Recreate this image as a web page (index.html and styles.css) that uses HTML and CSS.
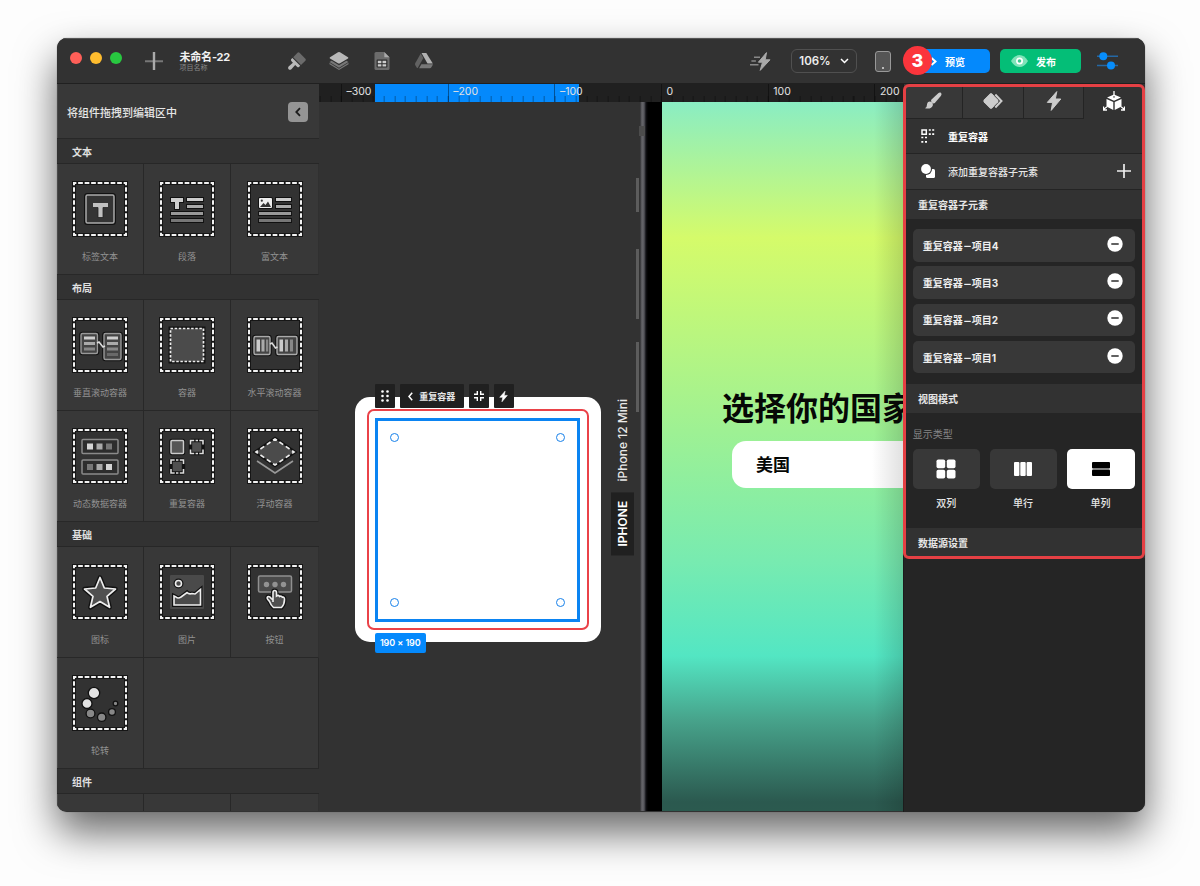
FILE: index.html
```html
<!DOCTYPE html>
<html lang="zh-CN">
<head>
    <meta charset="UTF-8">
    <meta name="viewport" content="width=device-width, initial-scale=1.0">
    <title>未命名-22</title>
    <link rel="stylesheet" href="styles.css">
</head>
<body>
    <svg class="defs" width="0" height="0">
        <symbol id="frame" viewBox="0 0 58 58">
            <rect x="3" y="3" width="52" height="52" fill="#323232" stroke="#161616" stroke-width="4"/>
            <path d="M3 3H55V55H3Z" fill="none" stroke="#f2f2f2" stroke-width="2" stroke-dasharray="4.7 1.8" stroke-dashoffset="2.35"/>
        </symbol>
        <symbol id="bolt" viewBox="0 0 16 20">
            <path d="M10.8.6L1.3 11.4H6.6L5.2 19.4L14.8 8H9.3Z" stroke="currentColor" stroke-width="1" stroke-linejoin="round"/>
        </symbol>
        <symbol id="minus" viewBox="0 0 16 16">
            <circle cx="8" cy="8" r="7.7" fill="#fff"/>
            <path d="M4.3 8h7.4" stroke="#2c2c2c" stroke-width="1.5"/>
        </symbol>
    </svg>

    <div class="window">
        <header class="topbar">
            <div class="lights"><i class="red"></i><i class="yellow"></i><i class="green"></i></div>
            <svg class="add" width="18" height="18" viewBox="0 0 18 18"><path d="M0 9.3h18" stroke="#777" stroke-width="2"/><path d="M9 0v18" stroke="#aaa" stroke-width="2.4"/></svg>
            <div class="project">
                <b>未命名-22</b>
                <span>项目名称</span>
            </div>
            <div class="tools">
                <svg width="20" height="20" viewBox="0 0 20 20"><path d="M10.5 1.8Q11.5.8 12.5 1.8L18.4 7.7Q19.4 8.7 18.4 9.7L14 14 6.2 6.2Z" fill="#6b6b6b"/><path d="M5.4 7L13.2 14.8 12 16Q11 16.7 10 15.8L8.2 14 4.4 18.2Q2.8 19.4 1.6 18.2T1.6 15.4L5.9 11.7 4.3 10Q3.5 9 4.3 8.1Z" fill="#b9b9b9"/></svg>
                <svg width="20" height="20" viewBox="0 0 20 20"><path d="M.5 11.8L10 17.8 19.5 11.8V13.2L10 19 .5 13.2Z M.5 11L10 16.8 19.5 11 17.4 9.8 10 14.3 2.6 9.8Z" fill="#777"/><path d="M9 1.3Q10 .7 11 1.3L19 6.2Q19.8 6.9 19 7.6L11 12.3Q10 12.9 9 12.3L1 7.6Q.2 6.9 1 6.2Z" fill="#b8b8b8"/></svg>
                <svg width="20" height="20" viewBox="0 0 20 20"><path d="M4 1H12L17.5 6.5V17.5Q17.5 19 16 19H4Q2.5 19 2.5 17.5V2.5Q2.5 1 4 1Z" fill="#6c6c6c"/><path d="M12.3 1L17.5 6.2H12.3Z" fill="#aaa"/><rect x="4.6" y="8.6" width="10.8" height="8" rx=".8" fill="#2d2d2d"/><path d="M5.8 9.8h3.6v2.4H5.8zM10.5 9.8h3.7v2.4h-3.7zM5.8 13.2h3.6v2.3H5.8zM10.5 13.2h3.7v2.3h-3.7z" fill="#ccc"/></svg>
                <svg width="20" height="20" viewBox="0 0 20 20"><path d="M6.7 2.5L9.4 7.1 3.8 16.8Q3.3 17.4 2.8 16.8L1.2 13.9Q.8 13.1 1.2 12.3Z" fill="#626262"/><path d="M7.5 2H12.3L18.8 12.5H13.5Z" fill="#b2b2b2"/><path d="M7.4 13.3H18.9Q18.8 14 18.4 14.6L17.2 16.6Q16.8 17.3 16 17.3H5.1Z" fill="#777"/></svg>
            </div>
            <div class="actions">
                <svg class="fast" width="21" height="19" viewBox="0 0 21 19" fill="#aaa"><path d="M16.5 .6L8.4 10.2H12.5L10.2 18.4 20 7.8H15.2Z" stroke="#aaa" stroke-linejoin="round"/><path d="M4 5.2h6M1.4 9h4.5M0 12.8h8.5" stroke="#888" stroke-width="1.5"/></svg>
                <div class="zoom">106%<svg width="9" height="6" viewBox="0 0 9 6"><path d="M1 1l3.5 3.5L8 1" fill="none" stroke="#fff" stroke-width="1.5"/></svg></div>
                <div class="device"></div>
                <button class="preview"><svg width="7" height="9" viewBox="0 0 7 9"><path d="M1.5 1L5.5 4.5 1.5 8" fill="none" stroke="#fff" stroke-width="2"/></svg>预览<i class="badge">3</i></button>
                <button class="publish"><svg width="17" height="12" viewBox="0 0 17 12"><path d="M0 6Q3.5 0 8.5 0T17 6Q13.5 12 8.5 12T0 6Z" fill="#7fe3b9"/><circle cx="8.5" cy="6" r="3.5" fill="#fff"/><circle cx="8.5" cy="6" r="1.8" fill="#3cca90"/></svg>发布</button>
                <svg class="sliders" width="21" height="18" viewBox="0 0 21 18"><path d="M0 4.3h21M0 13.5h21" stroke="#2468a5" stroke-width="1.6"/><circle cx="6.3" cy="4.3" r="4" fill="#078dfb"/><circle cx="14" cy="13.5" r="4" fill="#078dfb"/></svg>
            </div>
        </header>

        <main class="workspace">
            <aside class="library">
                <div class="library-head">将组件拖拽到编辑区中<button class="collapse"><svg width="8" height="10" viewBox="0 0 8 10"><path d="M6 1.2L2.3 5 6 8.8" fill="none" stroke="#1c1c1c" stroke-width="1.8"/></svg></button></div>

                <h3>文本</h3>
                <div class="cells">
                    <div class="cell">
                        <svg viewBox="0 0 58 58"><use href="#frame"/><rect x="15" y="15" width="28" height="28" rx="1.5" fill="#333" stroke="#111" stroke-width="4"/><rect x="15" y="15" width="28" height="28" rx="1.5" fill="#343434" stroke="#aaa" stroke-width="1.5"/><path d="M21.5 22.5H37.5V27.5H32V37.5H27V27.5H21.5Z" fill="#c0c0c0" stroke="#222" stroke-width=".8"/></svg>
                        <span>标签文本</span>
                    </div>
                    <div class="cell">
                        <svg viewBox="0 0 58 58"><use href="#frame"/><g stroke="#101010" stroke-width="1.8" paint-order="stroke"><path d="M13 18h12v4h-4v7h-4v-7h-4z" fill="#ccc"/><path d="M29 18h16v3h-16z" fill="#ccc"/><path d="M29 25h16v3h-16z" fill="#aaa"/><path d="M13 32h32v3h-32z" fill="#999"/><path d="M13 39h32v3h-32z" fill="#777"/></g></svg>
                        <span>段落</span>
                    </div>
                    <div class="cell">
                        <svg viewBox="0 0 58 58"><use href="#frame"/><g stroke="#101010" stroke-width="1.8" paint-order="stroke"><rect x="13" y="18" width="13" height="10" rx="1" fill="#eee"/><path d="M30 18h15v3h-15z" fill="#ccc"/><path d="M30 25h15v3h-15z" fill="#aaa"/><path d="M13 32h32v3h-32z" fill="#999"/><path d="M13 39h32v3h-32z" fill="#777"/></g><path d="M14 27l3.5-4 2 2 2.5-3.5 3 5.5z" fill="#333"/><circle cx="15.8" cy="20.7" r="1.1" fill="#333"/></svg>
                        <span>富文本</span>
                    </div>
                </div>

                <h3>布局</h3>
                <div class="cells">
                    <div class="cell">
                        <svg viewBox="0 0 58 58"><use href="#frame"/><g fill="#444" stroke="#111" stroke-width="3.6"><rect x="10" y="17.5" width="16.5" height="20" rx="1.5"/><rect x="33" y="17.5" width="17" height="26" rx="1.5"/></g><g fill="#444" stroke="#999" stroke-width="1.4"><rect x="10" y="17.5" width="16.5" height="20" rx="1.5"/><rect x="33" y="17.5" width="17" height="26" rx="1.5"/></g><path d="M26 27l2-1 4 5 2-1" fill="none" stroke="#ddd" stroke-width="1.5"/><path d="M13 20.5h11v3H13zM36 20.5h11v3H36z" fill="#ccc"/><path d="M13 26h11v3H13zM36 26h11v3H36z" fill="#aaa"/><path d="M13 31.5h11v3H13zM36 31.5h11v3H36z" fill="#888"/><path d="M36 37h11v3H36z" fill="#696969"/></svg>
                        <span>垂直滚动容器</span>
                    </div>
                    <div class="cell">
                        <svg viewBox="0 0 58 58"><use href="#frame"/><rect x="12.5" y="12.5" width="33" height="33" fill="#4b4b4b" stroke="#111" stroke-width="4"/><rect x="12.5" y="12.5" width="33" height="33" fill="#4b4b4b" stroke="#eee" stroke-width="1.7" stroke-dasharray="2.5 1.625"/></svg>
                        <span>容器</span>
                    </div>
                    <div class="cell">
                        <svg viewBox="0 0 58 58"><use href="#frame"/><g fill="#444" stroke="#111" stroke-width="3.6"><rect x="8" y="20.5" width="16" height="18" rx="1.5"/><rect x="31" y="20.5" width="20" height="18" rx="1.5"/></g><g fill="#444" stroke="#aaa" stroke-width="1.4"><rect x="8" y="20.5" width="16" height="18" rx="1.5"/><rect x="31" y="20.5" width="20" height="18" rx="1.5"/></g><path d="M24 28l2-1 3.5 5 2-1" fill="none" stroke="#ddd" stroke-width="1.5"/><path d="M10.5 23.5h3.5v12h-3.5zM33.5 23.5h3.5v12h-3.5z" fill="#ccc"/><path d="M15.5 23.5h3v12h-3zM39 23.5h3v12h-3z" fill="#aaa"/><path d="M20 23.5h2.2v12H20zM44 23.5h3v12h-3z" fill="#888"/></svg>
                        <span>水平滚动容器</span>
                    </div>
                    <div class="cell">
                        <svg viewBox="0 0 58 58"><use href="#frame"/><rect x="11" y="12.5" width="36" height="14" rx="1" fill="#2d2d2d" stroke="#8a8a8a" stroke-width="1.5"/><rect x="11" y="33" width="36" height="14" rx="1" fill="#2d2d2d" stroke="#8a8a8a" stroke-width="1.5"/><path d="M16 16.5h6v6h-6zM35 37h6v6h-6z" fill="#d5d5d5"/><path d="M25.5 16.5h6v6h-6zM25.5 37h6v6h-6z" fill="#aaa"/><path d="M35 16.5h6v6h-6zM16 37h6v6h-6z" fill="#777"/></svg>
                        <span>动态数据容器</span>
                    </div>
                    <div class="cell">
                        <svg viewBox="0 0 58 58"><use href="#frame"/><g fill="#505050" stroke="#111" stroke-width="3.4"><rect x="13" y="13.5" width="12.5" height="13" rx="1"/><rect x="32.5" y="13.5" width="12.5" height="13" rx="1"/><rect x="13" y="33" width="12.5" height="13" rx="1"/></g><rect x="13" y="13.5" width="12.5" height="13" rx="1" fill="#555" stroke="#ccc" stroke-width="1.5"/><g fill="none" stroke="#ddd" stroke-width="1.6"><path d="M32.5 17.5v-4h3.7M37.6 13.5h2.4M41.3 13.5H45v4M32.5 22.5v4h3.7M37.6 26.5h2.4M41.3 26.5H45v-4"/><path d="M13 37v-4h3.7M18 33h2.4M21.8 33h3.7v4M13 42v4h3.7M18 46h2.4M21.8 46h3.7v-4"/></g></svg>
                        <span>重复容器</span>
                    </div>
                    <div class="cell">
                        <svg viewBox="0 0 58 58"><use href="#frame"/><path d="M11 34l18 12 18-12" fill="none" stroke="#999" stroke-width="1.6"/><path d="M29 12L48 25 29 38 10 25Z" fill="#4b4b4b" stroke="#111" stroke-width="4"/><path d="M29 12L48 25 29 38 10 25Z" fill="#4b4b4b" stroke="#eee" stroke-width="1.7" stroke-dasharray="4.6 3.07" stroke-dashoffset="2.3"/></svg>
                        <span>浮动容器</span>
                    </div>
                </div>

                <h3>基础</h3>
                <div class="cells">
                    <div class="cell">
                        <svg viewBox="0 0 58 58"><use href="#frame"/><g fill="#505050" stroke-linejoin="round"><path d="M29 14.5L33.3 25 44.5 26 36 33.3 38.6 44.3 29 38.5 19.4 44.3 22 33.3 13.500 26 24.700 25Z" stroke="#111" stroke-width="4.5"/><path d="M29 14.5L33.3 25 44.5 26 36 33.3 38.6 44.3 29 38.5 19.4 44.3 22 33.3 13.5 26 24.7 25Z" stroke="#eee" stroke-width="1.7"/></g></svg>
                        <span>图标</span>
                    </div>
                    <div class="cell">
                        <svg viewBox="0 0 58 58"><use href="#frame"/><rect x="12" y="12" width="34" height="34" rx="1" fill="#4a4a4a"/><g fill="#4a4a4a" stroke="#111" stroke-width="4"><circle cx="20.5" cy="20.5" r="3"/><path d="M16 42V33L18 34Q20 36 23 34L29 29.5Q31 31.5 34 30.5L37 31 42.5 26.5V42Z"/></g><g fill="#4a4a4a" stroke="#eee" stroke-width="1.6"><circle cx="20.5" cy="20.5" r="3"/><path d="M16 42V33L18 34Q20 36 23 34L29 29.5Q31 31.5 34 30.5L37 31 42.5 26.5V42Z"/></g></svg>
                        <span>图片</span>
                    </div>
                    <div class="cell">
                        <svg viewBox="0 0 58 58"><use href="#frame"/><rect x="12.5" y="13" width="33" height="16" rx="1.5" fill="#4a4a4a" stroke="#909090" stroke-width="1.5"/><g fill="#929292"><circle cx="20.5" cy="21.5" r="2.7"/><circle cx="29" cy="21.5" r="2.7"/><circle cx="37.5" cy="21.5" r="2.7"/></g><g fill="#505050"><path d="M27 39V29.5Q27 27.5 28.7 27.5T30.5 29.5V33Q32.5 31.5 33.5 33.5 35.5 32.5 36.3 34.3 38.5 33.5 38.5 36.5 38.5 41.5 35.5 44.5H27.5Q25 42.5 23.5 38.5L21.5 36Q20.5 34 22.3 33.5 24 33.5 25.3 35.5L27 37" stroke="#111" stroke-width="4"/><path d="M27 39V29.5Q27 27.5 28.7 27.5T30.5 29.5V33Q32.5 31.5 33.5 33.5 35.5 32.5 36.3 34.3 38.5 33.5 38.5 36.5 38.5 41.5 35.5 44.5H27.5Q25 42.5 23.5 38.5L21.5 36Q20.5 34 22.3 33.5 24 33.5 25.3 35.5L27 37" stroke="#eee" stroke-width="1.6"/></g></svg>
                        <span>按钮</span>
                    </div>
                    <div class="cell">
                        <svg viewBox="0 0 58 58"><use href="#frame"/><g stroke="#111" stroke-width="1.3"><circle cx="23" cy="19" r="5.7" fill="#e2e2e2"/><circle cx="16" cy="29.5" r="5" fill="#e2e2e2"/><circle cx="19.5" cy="39.5" r="4.4" fill="#888"/><circle cx="30.7" cy="43.2" r="4.2" fill="#888"/><circle cx="41" cy="38" r="3.4" fill="#888"/><circle cx="44.5" cy="29.5" r="2.3" fill="#888"/></g></svg>
                        <span>轮转</span>
                    </div>
                    <div class="cell empty"></div>
                </div>

                <h3>组件</h3>
                <div class="cells">
                    <div class="cell"><svg viewBox="0 0 58 58"><use href="#frame"/></svg></div>
                    <div class="cell"><svg viewBox="0 0 58 58"><use href="#frame"/></svg></div>
                    <div class="cell"><svg viewBox="0 0 58 58"><use href="#frame"/></svg></div>
                </div>
            </aside>

            <section class="canvas">
                <div class="ruler">
                    <div class="range"></div>
                    <span>–300</span><span>–200</span><span>–100</span><span>0</span><span>100</span><span>200</span>
                </div>
                <div class="stage">
                    <div class="card">
                        <div class="highlight">
                            <div class="selection"><i></i><i></i><i></i><i></i></div>
                        </div>
                    </div>
                    <div class="node-bar">
                        <b><svg width="8" height="12" viewBox="0 0 8 12" fill="#fff"><circle cx="1.5" cy="1.5" r="1.3"/><circle cx="6.5" cy="1.5" r="1.3"/><circle cx="1.5" cy="6" r="1.3"/><circle cx="6.5" cy="6" r="1.3"/><circle cx="1.5" cy="10.5" r="1.3"/><circle cx="6.5" cy="10.5" r="1.3"/></svg></b>
                        <b class="name"><svg width="5" height="9" viewBox="0 0 5 9"><path d="M4.2.8L1 4.5 4.2 8.2" fill="none" stroke="#fff" stroke-width="1.5"/></svg>重复容器</b>
                        <b><svg width="10" height="10" viewBox="0 0 10 10"><path d="M3.3 0v3.3H0M6.7 0v3.3H10M3.3 10V6.7H0M6.7 10V6.7H10" fill="none" stroke="#fff" stroke-width="1.4"/></svg></b>
                        <b class="bolt"><svg width="9" height="13" fill="#fff"><use href="#bolt"/></svg></b>
                    </div>
                    <div class="size">190 × 190</div>
                    <div class="device-name"><b>IPHONE</b><span>iPhone 12 Mini</span></div>
                    <div class="phone">
                        <i class="side mute"></i><i class="side up"></i><i class="side down"></i><i class="antenna"></i>
                        <div class="screen">
                            <h1>选择你的国家</h1>
                            <div class="field">美国</div>
                        </div>
                    </div>
                </div>
            </section>

            <aside class="inspector">
                <nav class="tabs">
                    <a><svg width="18" height="18" viewBox="0 0 18 18" fill="#ccc"><path d="M16.5.6Q18.3 2 16.8 4L10.8 11Q9.5 12 8 10.5T7.5 7.5L14.5 1Q15.6 0 16.5.6Z"/><path d="M6 9.5Q9.5 10 8.8 13.5 7.5 17.5 1 16.3 3 15.5 3 12.5 3.3 9.5 6 9.5Z"/></svg></a>
                    <a><svg width="20" height="16" viewBox="0 0 20 16"><path d="M7 .7Q8 0 9 .7L15 6.8Q16 8 15 9.2L9 15.3Q8 16 7 15.3L1 9.2Q0 8 1 6.8Z" fill="#ccc"/><path d="M12 1.5L18.500 8 12 14.500" fill="none" stroke="#383838" stroke-width="4"/><path d="M7 .7Q8 0 9 .7L15 6.8Q16 8 15 9.2L9 15.3Q8 16 7 15.3L1 9.200Q0 8 1 6.800Z" fill="#ccc"/><path d="M12.300 1.500L18.500 8 12.300 14.500" fill="none" stroke="#ccc" stroke-width="2"/></svg></a>
                    <a class="bolt"><svg width="16" height="20" fill="#ccc"><use href="#bolt"/></svg></a>
                    <a class="active"><svg width="22" height="20" viewBox="0 0 22 20"><path d="M11 3.5L18 6.5 11 9.7 4 6.5ZM3.5 8L10.3 11V19L3.5 15.5ZM18.5 8L11.7 11V19L18.5 15.5Z" fill="#fff"/><path d="M11 0v6M0 18.8l4-3M22 18.8l-4-3M.5 15.5V19H4M21.5 15.5V19H18" stroke="#fff" stroke-width="1.3" fill="none"/><path d="M11 5v1.8" stroke="#303030" stroke-width="1"/></svg></a>
                </nav>
                <div class="row title"><svg width="14" height="14" viewBox="0 0 14 14" fill="none" stroke="#fff"><path d="M1 1h4.3v4.3H1z" stroke-width="1.5"/><path d="M7.8 1h2M11.2 1h2M7.8 5.2h2M11.2 5.2h2M.3 8.5h2M4 8.5h2M.3 12.8h2M4 12.8h2" stroke-width="1.7"/></svg>重复容器</div>
                <div class="row add-row"><svg width="14" height="14" viewBox="0 0 14 14"><path d="M7 5H12.5Q14 5 14 6.5V12.5Q14 14 12.5 14H6.5Q5 14 5 12.5V6Z" fill="#fff"/><circle cx="5.2" cy="5" r="5.9" fill="#383838"/><circle cx="5" cy="5" r="4.9" fill="#fff"/></svg>添加重复容器子元素<svg class="plus" width="14" height="14" viewBox="0 0 14 14"><path d="M0 7h14M7 0v14" stroke="#eee" stroke-width="1.7"/></svg></div>
                <h4>重复容器子元素</h4>
                <ul class="items">
                    <li>重复容器<em>–</em>项目4<svg width="16" height="16"><use href="#minus"/></svg></li>
                    <li>重复容器<em>–</em>项目3<svg width="16" height="16"><use href="#minus"/></svg></li>
                    <li>重复容器<em>–</em>项目2<svg width="16" height="16"><use href="#minus"/></svg></li>
                    <li>重复容器<em>–</em>项目1<svg width="16" height="16"><use href="#minus"/></svg></li>
                </ul>
                <h4>视图模式</h4>
                <div class="modes">
                    <p>显示类型</p>
                    <div class="mode-list">
                        <div class="mode"><button><svg width="20" height="20" viewBox="0 0 20 20" fill="#fff"><rect x=".5" y=".5" width="8.7" height="8.7" rx="1.8"/><rect x="10.8" y=".5" width="8.7" height="8.7" rx="1.8"/><rect x=".5" y="10.8" width="8.7" height="8.7" rx="1.8"/><rect x="10.8" y="10.8" width="8.7" height="8.7" rx="1.8"/></svg></button>双列</div>
                        <div class="mode"><button><svg width="18" height="14" viewBox="0 0 18 14" fill="#fff"><rect width="5.4" height="14" rx="1"/><rect x="6.3" width="5.4" height="14" rx="1"/><rect x="12.6" width="5.4" height="14" rx="1"/></svg></button>单行</div>
                        <div class="mode selected"><button><svg width="18" height="14" viewBox="0 0 18 14"><rect width="18" height="6.4" rx="1"/><rect y="7.6" width="18" height="6.4" rx="1"/></svg></button>单列</div>
                    </div>
                </div>
                <h4>数据源设置</h4>
                <div class="inspector-mark"></div>
            </aside>
        </main>
    </div>
</body>
</html>
```

FILE: styles.css
```css
* {
    box-sizing: border-box;
}

body {
    margin: 0;
    height: 886px;
    padding: 38px 0 0 57px;
    overflow: hidden;
    background: #fdfdfd;
    color: #e6e6e6;
    font-family: Inter, "Noto Sans CJK SC", sans-serif;
    font-size: 10px;
}

svg {
    display: block;
    flex: none;
}

.defs {
    position: absolute;
}

button {
    margin: 0;
    padding: 0;
    border: none;
    font-family: inherit;
    color: #fff;
}

i, em {
    font-style: normal;
}

.window {
    display: flex;
    flex-direction: column;
    width: 1088px;
    height: 774px;
    overflow: hidden;
    border-radius: 10px;
    background: #323232;
    box-shadow: 0 0 1px #555, 0 20px 40px rgba(0, 0, 0, 0.6);
}

/* top bar */
.topbar {
    display: flex;
    align-items: center;
    flex: none;
    height: 46px;
    padding-left: 13px;
    border-top: 1px solid #555;
    border-bottom: 1px solid #202020;
    background: #323232;
}

.lights {
    display: flex;
    gap: 8px;
    margin-top: -7px;
}

.lights i {
    width: 12px;
    height: 12px;
    border-radius: 50%;
}

.red { background: #fe5f58; }
.yellow { background: #febc2e; }
.green { background: #28c840; }

.add {
    margin-left: 22.5px;
}

.project {
    display: flex;
    flex-direction: column;
    width: 107px;
    margin-left: 17px;
}

.project b {
    font-size: 11px;
    line-height: 14px;
    letter-spacing: -0.2px;
    color: #f2f2f2;
}

.project span {
    font-size: 7px;
    line-height: 8px;
    color: #888;
}

.tools {
    display: flex;
    gap: 22.5px;
}

.actions {
    display: flex;
    align-items: center;
    margin-left: auto;
    padding-right: 27px;
}

.zoom {
    display: flex;
    align-items: center;
    justify-content: center;
    gap: 9px;
    width: 66px;
    height: 24px;
    margin: 0 18px 0 20px;
    border: 1px solid #505050;
    border-radius: 6px;
    font-size: 11.5px;
    font-weight: 600;
    color: #eee;
}

.device {
    width: 16px;
    height: 21px;
    margin-right: 18px;
    border: 1.5px solid #999;
    border-radius: 3px;
    background: radial-gradient(circle at 50% 84%, #bbb 1px, #555 1.5px);
}

.preview, .publish {
    display: flex;
    align-items: center;
    height: 24px;
    border-radius: 5px;
    font-size: 10px;
    font-weight: 600;
}

.preview {
    position: relative;
    width: 81px;
    padding-left: 21px;
    gap: 8px;
    margin-right: 10px;
    background: #0489fc;
}

.publish {
    width: 81px;
    padding-left: 11px;
    gap: 8px;
    margin-right: 16px;
    background: #04be77;
}

.badge {
    position: absolute;
    left: -6px;
    top: -3px;
    width: 29px;
    height: 29px;
    border-radius: 50%;
    background: #fb353c;
    font-size: 18px;
    font-weight: 800;
    line-height: 29px;
    text-align: center;
}

.workspace {
    display: flex;
    flex: 1;
    min-height: 0;
}

/* component library */
.library {
    flex: none;
    width: 262px;
    height: 727px;
    overflow: hidden;
    background: #383838;
    box-shadow: inset 1px 0 #4a4a4a;
}

.library-head {
    display: flex;
    align-items: center;
    justify-content: space-between;
    height: 55px;
    padding: 1px 11px 0 10px;
    font-size: 11px;
    font-weight: 500;
    border-bottom: 1px solid #282828;
}

.collapse {
    display: flex;
    align-items: center;
    justify-content: center;
    width: 20px;
    height: 20px;
    border-radius: 4px;
    background: #949494;
}

.library h3 {
    height: 25.3px;
    margin: 0;
    padding-left: 15px;
    border-bottom: 1px solid #272727;
    background: #323232;
    font-size: 10px;
    font-weight: 700;
    line-height: 27px;
    color: #e0e0e0;
}

.cells {
    display: grid;
    grid-template-columns: 87px 87px 88px;
    grid-auto-rows: 110.8px;
}

.cell {
    display: flex;
    flex-direction: column;
    align-items: center;
    padding-top: 16px;
    border-right: 1px solid #282828;
    border-bottom: 1px solid #282828;
    font-size: 9px;
    line-height: 12px;
    color: #929292;
}

.cell:nth-child(3n) {
    border-right-color: #303030;
}

.cell svg {
    width: 58px;
    height: 58px;
    margin-bottom: 13px;
}

.cell.empty {
    grid-column: span 2;
}

/* canvas */
.canvas {
    position: relative;
    flex: none;
    width: 584px;
    overflow: hidden;
    background: #323232;
}

.ruler {
    position: relative;
    display: flex;
    height: 18px;
    padding-left: 22px;
    background: #202020;
}

.ruler::after {
    content: "";
    position: absolute;
    inset: 12px 0 0 0;
    background: repeating-linear-gradient(90deg, rgba(0, 0, 0, 0.35) 0 1px, transparent 1px 10.67px) 0.66px 0;
}

.ruler span {
    position: relative;
    flex: none;
    width: 106.7px;
    padding-left: 4.5px;
    border-left: 1px solid rgba(0, 0, 0, 0.4);
    font-size: 10.5px;
    line-height: 15px;
    color: #e2e2e2;
}

.range {
    position: absolute;
    left: 56px;
    width: 204px;
    height: 18px;
    background: #0489fc;
}

.stage {
    position: relative;
    height: 709px;
}

.card {
    position: absolute;
    left: 35.5px;
    top: 294.5px;
    width: 246px;
    height: 245px;
    padding: 12px;
    border-radius: 15px;
    background: #fff;
}

.highlight {
    width: 222px;
    height: 221px;
    padding: 7px 6px;
    border: 2px solid #ea4248;
    border-radius: 7px;
}

.selection {
    display: grid;
    grid-template-columns: 1fr 1fr;
    align-content: space-between;
    width: 205px;
    height: 204px;
    padding: 11px;
    border: 3px solid #0b84f2;
}

.selection i {
    width: 9px;
    height: 9px;
    margin: 1px;
    border: 1.5px solid #1781ea;
    border-radius: 50%;
}

.selection i:nth-child(even) {
    justify-self: end;
}

.node-bar {
    position: absolute;
    left: 56px;
    top: 282px;
    display: flex;
    gap: 5px;
}

.node-bar b {
    display: flex;
    align-items: center;
    justify-content: center;
    width: 20px;
    height: 24px;
    background: #202020;
    font-size: 9px;
    border-radius: 1px;
}

.node-bar .name {
    gap: 6px;
    width: 63.5px;
}

.node-bar .bolt {
    color: #fff;
}

.size {
    position: absolute;
    left: 56px;
    top: 531px;
    width: 50.5px;
    border-radius: 2px;
    background: #0489fc;
    font-size: 9px;
    font-weight: 600;
    line-height: 20px;
    letter-spacing: -0.1px;
    text-align: center;
    color: #fff;
}

.device-name {
    position: absolute;
    left: 292px;
    top: 297px;
    display: flex;
    align-items: center;
    gap: 11px;
    writing-mode: vertical-rl;
    transform: rotate(180deg);
    font-size: 12px;
    font-weight: 500;
    color: #e8e8e8;
}

.device-name b {
    height: 63px;
    background: #202020;
    line-height: 23px;
    font-weight: 600;
    text-align: center;
    color: #fff;
}

.phone {
    position: absolute;
    left: 321px;
    top: 0;
    width: 263px;
    height: 709px;
    padding-left: 22px;
    background: linear-gradient(90deg, #303033 0, #66666a 2px, #58585e 4px, #101014 6px, #000 8px);
}

.side {
    position: absolute;
    left: -4px;
    width: 3px;
    background: #5c5c5c;
}

.mute {
    top: 76px;
    height: 34px;
}

.up {
    top: 147px;
    height: 70px;
}

.down {
    top: 240px;
    height: 70px;
}

.antenna {
    position: absolute;
    left: -1px;
    top: 24px;
    width: 6px;
    height: 10px;
    background: #4c4c4c;
}

.screen {
    height: 709px;
    padding: 284px 0 0 60px;
    overflow: hidden;
    background: linear-gradient(90deg, transparent 212px, rgba(0, 0, 0, 0.14)),
        linear-gradient(#8aedc3 0, #d5fb6a 136px, #a4f28f 308px, #78ebb0 458px, #53e6c3 554px, #47a38b 618px, #2b594f 700px, #2b5a4f);
    color: #060806;
}

.screen h1 {
    margin: 0;
    font-size: 32px;
    font-weight: 700;
    line-height: 46px;
    white-space: nowrap;
}

.field {
    width: 260px;
    height: 47px;
    margin: 9px 0 0 10px;
    padding-left: 24px;
    border-radius: 14px;
    background: linear-gradient(90deg, #fff 140px, #ddd 175px);
    font-size: 17px;
    font-weight: 700;
    line-height: 48px;
}

/* inspector */
.inspector {
    position: relative;
    flex: 1;
    border-left: 1px solid #1c1c1c;
    background: #252525;
}

.tabs {
    display: grid;
    grid-template-columns: 59px 61px 60px 61px;
    height: 34.5px;
}

.tabs a {
    display: flex;
    align-items: center;
    justify-content: center;
    padding-top: 1px;
    border-right: 1px solid #242424;
    border-bottom: 1px solid #242424;
    background: #383838;
}

.tabs .bolt {
    color: #ccc;
}

.tabs .active {
    border-color: #323232;
    background: #323232;
}

.row {
    display: flex;
    align-items: center;
    gap: 13px;
    height: 35px;
    padding-left: 17px;
    border-bottom: 1px solid #242424;
    background: #323232;
}

.title {
    padding-top: 1px;
    font-weight: 700;
    color: #fff;
}

.add-row {
    height: 36px;
    background: #383838;
    font-weight: 500;
}

.plus {
    margin: 0 14px 0 auto;
}

.inspector h4 {
    height: 29.5px;
    margin: 0;
    padding-left: 14px;
    background: #323232;
    font-size: 10px;
    font-weight: 600;
    line-height: 31px;
}

.items {
    display: flex;
    flex-direction: column;
    gap: 4.8px;
    height: 164.5px;
    margin: 0;
    padding: 10px 10.5px 0 8.7px;
    list-style: none;
}

.items li {
    display: flex;
    align-items: center;
    height: 32.5px;
    padding: 0 12px 0 10px;
    border-radius: 5px;
    background: #383838;
    font-weight: 700;
    color: #eee;
}

.items em {
    width: 9px;
    text-align: center;
    transform: scaleX(1.3);
}

.items svg {
    margin: -3px 0 0 auto;
}

.modes {
    height: 115px;
    padding: 13px 10.5px 0 8.7px;
}

.modes p {
    margin: 0;
    line-height: 16px;
    color: #858585;
}

.mode-list {
    display: flex;
    justify-content: space-between;
    margin-top: 7px;
}

.mode {
    line-height: 28px;
    text-align: center;
    font-weight: 500;
}

.mode button {
    display: flex;
    align-items: center;
    justify-content: center;
    width: 67px;
    height: 40px;
    border-radius: 5px;
    background: #383838;
}

.mode.selected button {
    width: 68px;
    background: #fff;
}

.inspector-mark {
    position: absolute;
    left: -1px;
    top: 0;
    width: 242px;
    height: 475px;
    border: 3px solid #e54044;
    border-radius: 6px;
}
```
